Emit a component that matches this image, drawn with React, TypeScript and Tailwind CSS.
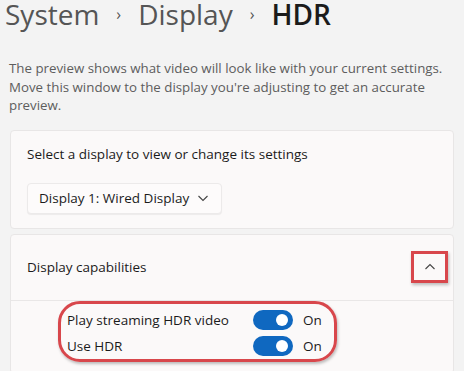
import React from "react";

function Toggle() {
  return (
    <div className="relative w-[40px] h-[20px] rounded-full bg-[#0f68c0] flex items-center justify-end pr-[5px]">
      <div className="w-[12px] h-[12px] rounded-full bg-white" />
    </div>
  );
}

export default function App() {
  return (
    <div
      className="w-[464px] h-[371px] overflow-hidden bg-[#f3f3f3] text-[#1b1b1b]"
      style={{ fontFamily: '"Segoe UI", "Open Sans", sans-serif' }}
    >
      <div className="pl-[5px] h-[32px] flex items-start gap-[17px] text-[28px] leading-[28px]">
        <span className="text-[#555555]">System</span>
        <span className="text-[#555555] text-[16px] leading-[28px]">›</span>
        <span className="text-[#555555]">Display</span>
        <span className="text-[#555555] text-[16px] leading-[28px]">›</span>
        <span className="font-semibold text-[#1b1b1b]">HDR</span>
      </div>
      <p className="mt-[27px] pl-[9px] pr-[14px] text-[13.3px] leading-[18.5px] text-[#5d5d5d]">
        The preview shows what video will look like with your current settings. Move this window to the display you're adjusting to get an accurate preview.
      </p>
      <div className="mx-[10px] mt-[15px] h-[99px] rounded-[4px] border border-[#e8e6e6] bg-[#fbf9f9] px-[16px] pt-[14px]">
        <div className="text-[13.5px] leading-[18px] text-[#1b1b1b]">Select a display to view or change its settings</div>
        <div className="mt-[20px] w-[195px] h-[31px] rounded-[4px] border border-[#eceaea] bg-[#fdfbfb] shadow-[0_1px_1px_rgba(0,0,0,0.06)] flex items-center justify-between pl-[11px] pr-[12px] text-[13.5px]">
          <span>Display 1: Wired Display</span>
          <svg width="12" height="8" viewBox="0 0 12 8" fill="none">
            <path d="M1.5 2l4.5 4.5L10.5 2" stroke="#444" strokeWidth="1.1" />
          </svg>
        </div>
      </div>
      <div className="mx-[10px] mt-[5px] h-[140px] rounded-[4px] border border-[#e8e6e6] bg-[#fbf9f9]">
        <div className="h-[66px] flex items-center justify-between pl-[16px] pr-[5px] border-b border-[#e9e7e7]">
          <span className="text-[13.5px] mt-[1px]">Display capabilities</span>
          <div className="w-[37px] h-[32px] border-[3px] border-[#d8474c] shadow-[1px_2px_3px_rgba(0,0,0,0.25)] flex items-center justify-center">
            <svg width="12" height="8" viewBox="0 0 12 8" fill="none">
              <path d="M1.5 6l4.5-4.5L10.5 6" stroke="#444" strokeWidth="1.1" />
            </svg>
          </div>
        </div>
        <div className="ml-[47px] w-[279px] h-[61px] rounded-[22px] border-[3px] border-[#d8474c] shadow-[1px_2px_3px_rgba(0,0,0,0.25)] flex flex-col justify-start pt-[6px] gap-[6px] pl-[6px]">
          <div className="flex items-center">
            <span className="w-[186px] text-[13.5px] leading-[20px]">Play streaming HDR video</span>
            <Toggle />
            <span className="ml-[10px] text-[13.5px]">On</span>
          </div>
          <div className="flex items-center">
            <span className="w-[186px] text-[13.5px] leading-[20px]">Use HDR</span>
            <Toggle />
            <span className="ml-[10px] text-[13.5px]">On</span>
          </div>
        </div>
      </div>
    </div>
  );
}
